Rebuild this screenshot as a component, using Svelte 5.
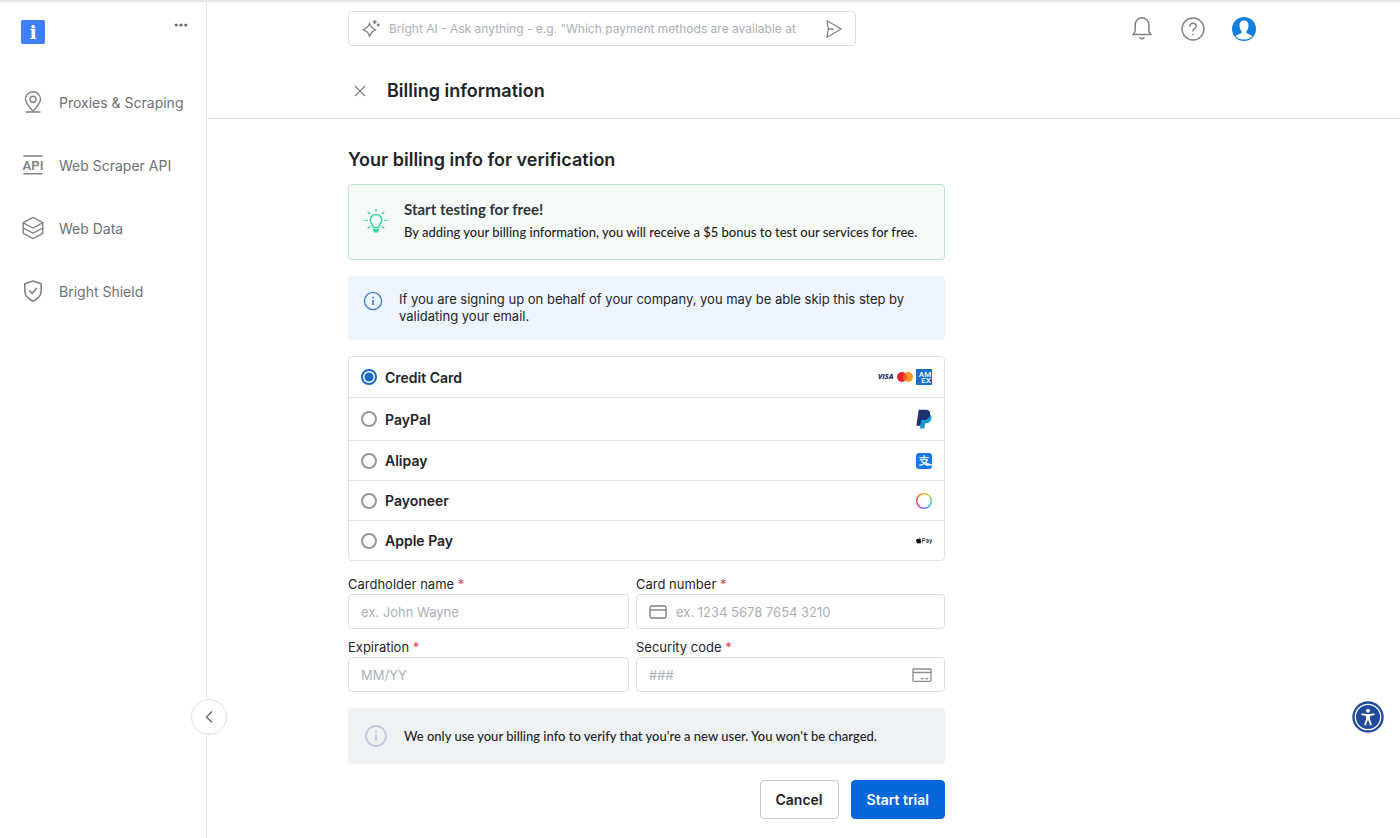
<script lang="ts">
    const navItems = [
        { id: 'proxies', label: 'Proxies & Scraping' },
        { id: 'api', label: 'Web Scraper API' },
        { id: 'data', label: 'Web Data' },
        { id: 'shield', label: 'Bright Shield' },
    ];

    const methods = [
        { id: 'card', label: 'Credit Card' },
        { id: 'paypal', label: 'PayPal' },
        { id: 'alipay', label: 'Alipay' },
        { id: 'payoneer', label: 'Payoneer' },
        { id: 'applepay', label: 'Apple Pay' },
    ];

    let method = $state('card');
    let question = $state('');
    let cardholder = $state('');
    let cardNumber = $state('');
    let expiration = $state('');
    let securityCode = $state('');
</script>

<div class="app">
    <aside class="sidebar">
        <div class="sidebar-top">
            <a class="logo" href="#home" aria-label="Home">
                <svg width="24" height="24" viewBox="0 0 24 24">
                    <rect width="24" height="24" rx="2" fill="#3d7ffc" />
                    <text x="12" y="19" text-anchor="middle" font-family="DejaVu Serif, serif" font-weight="700" font-size="19" fill="#fff">i</text>
                </svg>
            </a>
            <button class="icon-button more" aria-label="More">
                <svg width="14" height="6" viewBox="0 0 14 6" fill="#666c70">
                    <circle cx="2.2" cy="3" r="1.6" />
                    <circle cx="7" cy="3" r="1.6" />
                    <circle cx="11.8" cy="3" r="1.6" />
                </svg>
            </button>
        </div>

        <nav>
            {#each navItems as item (item.id)}
                <a class="nav-item" href={`#${item.id}`}>
                    <svg width="24" height="24" viewBox="0 0 24 24" fill="none" stroke="#7d8387" stroke-width="1.4" stroke-linecap="round" stroke-linejoin="round">
                        {#if item.id === 'proxies'}
                            <path d="M12 21.2C9.6 18.4 4.5 13.6 4.5 9.2a7.5 7.5 0 0 1 15 0c0 4.4-5.1 9.2-7.5 12z" />
                            <circle cx="12" cy="9.2" r="3" />
                            <path d="M5 22h14" />
                        {:else if item.id === 'api'}
                            <path d="M2.4 3h19.2M2.4 20.8h19.2" stroke-width="1.6" stroke-linecap="butt" />
                            <text x="12" y="16.8" text-anchor="middle" font-family="Roboto, sans-serif" font-weight="600" font-size="13" fill="#7d8387" stroke="none">API</text>
                        {:else if item.id === 'data'}
                            <path d="M12 1.4l9.8 5.2v10.8L12 22.6l-9.8-5.2V6.6z" />
                            <path d="M2.2 6.8l9.8 5.2 9.8-5.2M2.2 12l9.8 5.2 9.8-5.2" />
                        {:else}
                            <path d="M12 2l8.2 2.7v7.1c0 5-3.6 8.3-8.2 10.4-4.6-2.1-8.2-5.4-8.2-10.4V4.7z" stroke-width="1.6" />
                            <path d="M8.6 11.8l2.5 2.7 4.3-5.2" stroke-width="1.6" />
                        {/if}
                    </svg>
                    <span>{item.label}</span>
                </a>
            {/each}
        </nav>

        <button class="collapse" aria-label="Collapse sidebar">
            <svg width="8" height="14" viewBox="0 0 8 14" fill="none" stroke="#666" stroke-width="1.3">
                <path d="M7 1.5L1.5 7 7 12.5" />
            </svg>
        </button>
    </aside>

    <main>
        <header>
            <div class="topbar">
                <div class="search">
                    <svg width="20" height="20" viewBox="0 0 20 20" fill="none" stroke="#7d8387" stroke-width="1.3" stroke-linejoin="round">
                        <path d="M8.5 4.2c1 3.9 2.4 5.3 6.3 6.6-3.9 1.3-5.3 2.7-6.3 6.9-1-4.2-2.4-5.6-6.6-6.9 4.2-1.3 5.6-2.7 6.6-6.6z" />
                        <path d="M13.7 1v4M11.7 3h4M17.2 4.6v3M15.7 6.1h3" stroke-width="1.5" />
                    </svg>
                    <input type="text" aria-label="Ask Bright AI" placeholder={'Bright AI - Ask anything - e.g. "Which payment methods are available at'} bind:value={question} />
                    <button class="icon-button" aria-label="Send">
                        <svg width="18" height="20" viewBox="0 0 18 20" fill="none" stroke="#7d8387" stroke-width="1.3" stroke-linejoin="round" stroke-linecap="round">
                            <path d="M2 1.8l14.2 8.2L2 18.2l1.3-8.2zM3.3 10h5" />
                        </svg>
                    </button>
                </div>

                <div class="actions">
                    <button class="icon-button" aria-label="Notifications">
                        <svg width="24" height="24" viewBox="0 0 24 24" fill="none" stroke="#7d8387" stroke-width="1.5" stroke-linecap="round" stroke-linejoin="round">
                            <path d="M2.9 17.6h18.2c-1.5-.9-2.3-2.2-2.3-4.6V7.6a6.8 6.8 0 0 0-13.6 0V13c0 2.4-.8 3.7-2.3 4.6z" />
                            <path d="M10 20.8c.9 1.3 3.1 1.3 4 0" />
                        </svg>
                    </button>
                    <button class="icon-button" aria-label="Help">
                        <svg width="24" height="24" viewBox="0 0 24 24" fill="none" stroke="#7d8387" stroke-width="1.4" stroke-linecap="round">
                            <circle cx="12" cy="12" r="11" />
                            <path d="M8.8 9.3c0-1.8 1.4-3.1 3.2-3.1s3.2 1.2 3.2 2.9c0 2.5-3.2 2.6-3.2 5" />
                            <circle cx="12" cy="17.4" r=".5" fill="#7d8387" stroke-width=".8" />
                        </svg>
                    </button>
                    <button class="icon-button" aria-label="Account">
                        <svg width="24" height="24" viewBox="0 0 24 24">
                            <circle cx="12" cy="12" r="12" fill="#1280dc" />
                            <path d="M12 3.4c2.9 0 4.6 2 4.5 5-.1 2.5-.8 4.2-2 5.400v2c.4 1.200 4.600 1.600 5.800 3.600A11 11 0 0 1 12 22.500a11 11 0 0 1-8.300-3.100c1.200-2 5.400-2.400 5.800-3.600v-2c-1.200-1.200-1.900-2.900-2-5.400-.1-3 1.600-5 4.500-5z" fill="#fff" />
                        </svg>
                    </button>
                </div>
            </div>

            <div class="title-row">
                <button class="icon-button" aria-label="Close">
                    <svg width="12" height="12" viewBox="0 0 12 12" stroke="#777d81" stroke-width="1.1">
                        <path d="M1 1l10 10M11 1L1 11" />
                    </svg>
                </button>
                <h1>Billing information</h1>
            </div>
        </header>

        <form class="billing" onsubmit={(e) => e.preventDefault()}>
            <h2>Your billing info for verification</h2>

            <section class="bonus">
                <svg width="24" height="26" viewBox="0 0 24 26" fill="none" stroke="#3fd79b" stroke-width="1.5" stroke-linecap="round">
                    <path d="M9.5 19.2c0-2.3-3.3-3.3-3.3-7a5.8 5.8 0 0 1 11.6 0c0 3.7-3.3 4.7-3.3 7z" />
                    <path d="M9.3 21.6h5.4l-1.3 2.2h-2.8z" fill="#3fd79b" />
                    <path d="M12 1.2v2M4.2 4.2l1.5 1.5M19.8 4.2l-1.5 1.5M.9 12.4h2.2M20.9 12.4h2.2M4.2 20.3l1.5-1.5M19.8 20.3l-1.5-1.5" stroke-width="1.3" />
                </svg>
                <div>
                    <h3>Start testing for free!</h3>
                    <p>By adding your billing information, you will receive a $5 bonus to test our services for free.</p>
                </div>
            </section>

            <section class="company">
                <svg width="20" height="20" viewBox="0 0 20 20" fill="none" stroke="#3d7fc0">
                    <circle cx="10" cy="10" r="8.6" stroke-width="1.3" />
                    <path d="M10 9v5" stroke-width="1.6" />
                    <circle cx="10" cy="6.5" r=".9" fill="#3d7fc0" stroke="none" />
                </svg>
                <p>If you are signing up on behalf of your company, you may be able skip this step by validating your email.</p>
            </section>

            <div class="methods" role="radiogroup" aria-label="Payment method">
                {#each methods as m (m.id)}
                    <label class="method">
                        <input type="radio" name="method" value={m.id} bind:group={method} />
                        <span>{m.label}</span>
                        {#if m.id === 'card'}
                            <svg width="54" height="20" viewBox="0 -2 54 20">
                                <text x="0" y="10" font-family="Open Sans, sans-serif" font-weight="800" font-style="italic" font-size="7" fill="#20306f">VISA</text>
                                <circle cx="24" cy="8" r="5" fill="#e9202b" />
                                <circle cx="30" cy="8" r="5" fill="#f79a2b" />
                                <path d="M27 4a5 5 0 0 1 0 8 5 5 0 0 1 0-8z" fill="#f45a1c" />
                                <rect x="38" width="16" height="16" fill="#1670c8" />
                                <text x="47" y="7.5" text-anchor="middle" font-family="Roboto, sans-serif" font-weight="500" font-size="8" fill="#fff">AM</text>
                                <text x="48" y="14" text-anchor="middle" font-family="Roboto, sans-serif" font-weight="500" font-size="8" fill="#fff">EX</text>
                            </svg>
                        {:else if m.id === 'paypal'}
                            <svg width="16" height="22" viewBox="0 -1 16 22">
                                <path d="M5.5 5h7.9c2.2 1 2.5 3 1.9 5.3-.7 2.6-2.5 3.9-5.3 3.9H9.2l-.9 5.3H4z" fill="#1797d5" />
                                <path d="M2.7.7h6.8c3.5 0 5.1 1.9 4.5 5.2-.6 3.5-2.8 5-6.2 5H5.4l-1 5.8H.4z" fill="#20306f" />
                            </svg>
                        {:else if m.id === 'alipay'}
                            <svg width="16" height="16" viewBox="0 0 16 16">
                                <rect width="16" height="16" rx="3" fill="#1677ef" />
                                <text x="8" y="12" text-anchor="middle" font-family="Noto Sans CJK SC, sans-serif" font-weight="500" font-size="11" fill="#fff">支</text>
                                <path d="M10 10.200c2 .9 4 1.500 6 1.900" fill="none" stroke="#fff" stroke-width="1.400" />
                            </svg>
                        {:else if m.id === 'payoneer'}
                            <span class="ring"></span>
                        {:else}
                            <svg width="16" height="8" viewBox="0 0 16 8">
                                <path d="M3.7 1.8c.5-.2 1.1 0 1.4.4-.8.6-.7 1.9.3 2.3C5 5.7 4.5 6.4 4 6.4c-.5 0-.6-.2-1.1-.2s-.7.2-1.1.2C.9 6.400.2 4.900.2 3.700.2 2.300 1.300 1.500 2.300 1.900c.6.2.9.1 1.400-.1zM2.800 1.500C2.800.8 3.300.3 3.900.2c0 .7-.4 1.200-1.100 1.300z" fill="#111" />
                                <text x="5.8" y="6.200" font-family="Inter, sans-serif" font-weight="500" font-size="6" fill="#111">Pay</text>
                            </svg>
                        {/if}
                    </label>
                {/each}
            </div>

            <div class="fields">
                <div class="field">
                    <label for="cardholder">Cardholder name <em>*</em></label>
                    <div class="control">
                        <input id="cardholder" type="text" placeholder="ex. John Wayne" bind:value={cardholder} />
                    </div>
                </div>
                <div class="field">
                    <label for="card-number">Card number <em>*</em></label>
                    <div class="control">
                        <svg width="18" height="14" viewBox="0 0 18 14" fill="none" stroke="#7d8387" stroke-width="1.4">
                            <rect x="1" y="1" width="16" height="12" rx="1.5" />
                            <path d="M1 5h16" />
                        </svg>
                        <input id="card-number" type="text" placeholder="ex. 1234 5678 7654 3210" bind:value={cardNumber} />
                    </div>
                </div>
                <div class="field">
                    <label for="expiration">Expiration <em>*</em></label>
                    <div class="control">
                        <input id="expiration" type="text" placeholder="MM/YY" bind:value={expiration} />
                    </div>
                </div>
                <div class="field">
                    <label for="security-code">Security code <em>*</em></label>
                    <div class="control">
                        <input id="security-code" type="text" placeholder="###" bind:value={securityCode} />
                        <svg width="20" height="14" viewBox="0 0 20 14" fill="none" stroke="#8b9094" stroke-width="1.3">
                            <rect x="1" y="1" width="18" height="12.3" rx=".5" />
                            <path d="M1 4.5h18M8.7 10.7h3M13.2 10.7h3" />
                        </svg>
                    </div>
                </div>
            </div>

            <section class="notice">
                <svg width="24" height="24" viewBox="0 0 24 24" fill="none" stroke="#c3cad9">
                    <circle cx="12" cy="12" r="10" stroke-width="1.8" />
                    <path d="M12 10.5v6.5" stroke-width="1.8" />
                    <circle cx="12" cy="7.6" r="1.1" fill="#c3cad9" stroke="none" />
                </svg>
                <p>We only use your billing info to verify that you're a new user. You won't be charged.</p>
            </section>

            <div class="buttons">
                <button type="button" class="cancel">Cancel</button>
                <button type="submit" class="submit">Start trial</button>
            </div>
        </form>
    </main>

    <button class="accessibility" aria-label="Accessibility options">
        <svg width="32" height="32" viewBox="0 0 32 32">
            <circle cx="16" cy="16" r="15.7" fill="#214a9a" />
            <circle cx="16" cy="16" r="12.7" fill="none" stroke="#fff" stroke-width="1.3" />
            <circle cx="16" cy="9.8" r="2" fill="#fff" />
            <path d="M10.3 13.4l4.2.6h3l4.2-.6M16 14v4.5M14.9 14.5v4l-1.7 5M17.1 14.5v4l1.7 5" fill="none" stroke="#fff" stroke-width="1.9" stroke-linecap="round" stroke-linejoin="round" />
        </svg>
    </button>
</div>

<style>
    :global(body) {
        background: #fff;
        color: #1f2428;
        font-family: Inter, "Liberation Sans", sans-serif;
        font-size: 14px;
    }

    * {
        box-sizing: border-box;
    }

    h1, h2, h3, p {
        margin: 0;
    }

    svg {
        display: block;
        flex-shrink: 0;
    }

    button, input {
        font: inherit;
        color: inherit;
    }

    button {
        cursor: pointer;
    }

    .app {
        display: flex;
        min-height: 100vh;
        border-top: 2px solid #e6e6e6;
    }

    .sidebar {
        position: relative;
        flex: 0 0 207px;
        border-right: 1px solid #e3e5e6;
    }

    .sidebar-top {
        display: flex;
        justify-content: space-between;
        align-items: flex-start;
        padding: 18px 18px 0 21px;
    }

    .icon-button {
        display: flex;
        padding: 0;
        border: none;
        background: none;
    }

    .more {
        padding-top: 2px;
    }

    nav {
        display: flex;
        flex-direction: column;
        gap: 39px;
        padding: 46px 21px;
    }

    .nav-item {
        display: flex;
        align-items: center;
        gap: 14px;
        height: 24px;
        color: #6c7276;
        text-decoration: none;
        white-space: nowrap;
    }

    .collapse {
        position: absolute;
        right: -21px;
        bottom: 103px;
        display: flex;
        align-items: center;
        justify-content: center;
        width: 36px;
        height: 36px;
        padding: 0;
        border: 1px solid #dcdfe1;
        border-radius: 50%;
        background: #fff;
    }

    main {
        flex: 1;
        min-width: 0;
    }

    header {
        padding: 9px 144px 0 141px;
        border-bottom: 1px solid #dfe1e3;
    }

    .topbar {
        display: flex;
        align-items: center;
        justify-content: space-between;
    }

    .search {
        display: flex;
        align-items: center;
        gap: 8px;
        flex: 0 1 508px;
        height: 35px;
        padding: 0 12px;
        border: 1px solid #dcdfe1;
        border-radius: 4px;
    }

    .search input {
        flex: 1;
        min-width: 0;
        font-size: 12px;
        padding: 0;
        border: none;
        outline: none;
        background: none;
    }

    input::placeholder {
        color: #aab0b5;
        opacity: 1;
    }

    .actions {
        display: flex;
        gap: 27px;
    }

    .title-row {
        display: flex;
        align-items: center;
        gap: 21px;
        padding: 33px 0 15px 6px;
    }

    h1 {
        font-size: 18px;
        line-height: 24px;
        font-weight: 600;
    }

    h2 {
        margin-bottom: 12px;
        font-size: 18px;
        line-height: 24px;
        font-weight: 600;
    }

    .billing {
        width: 100%;
        max-width: 738px;
        padding: 29px 0 19px 141px;
    }

    .bonus, .company, .notice {
        display: flex;
        border-radius: 4px;
        margin-bottom: 16px;
    }

    .bonus {
        align-items: center;
        gap: 16px;
        padding: 13px 15px 15px;
        border: 1px solid #bfe3d3;
        background: #f6fbf8;
    }

    .bonus h3, .bonus p, .notice p {
        font-family: Lato, sans-serif;
        font-size: 13px;
        line-height: 23px;
        font-weight: 500;
        font-variant-ligatures: none;
    }

    .bonus h3 {
        font-size: 15px;
        font-weight: 700;
        color: #2c3440;
    }

    .company {
        gap: 16px;
        padding: 15px;
        background: #edf4fe;
    }

    .company p {
        font-size: 13px;
        line-height: 17px;
    }

    .methods {
        border: 1px solid #dfe1e3;
        border-radius: 4px;
    }

    .method {
        display: flex;
        align-items: center;
        gap: 8px;
        padding: 10px 12px;
        line-height: 19px;
        font-weight: 600;
    }

    .method + .method {
        border-top: 1px solid #dfe1e3;
    }

    .method > span:nth-child(2) {
        flex: 1;
    }

    .method input {
        appearance: none;
        width: 16px;
        height: 16px;
        margin: 0;
        border: 2px solid #96999b;
        border-radius: 50%;
        background: #fff;
    }

    .method input:checked {
        border-color: #1a68c7;
        background: radial-gradient(circle, #1a68c7 4px, #fff 5px);
    }

    .ring {
        width: 16px;
        height: 16px;
        border-radius: 50%;
        background:
            radial-gradient(circle, #fff 6px, transparent 7px),
            conic-gradient(#f7a32c, #c9d63a, #3fce7a, #31b8e8, #6a63e0, #d83bb0, #f0413b, #f7762c, #f7a32c);
    }

    .fields {
        display: grid;
        grid-template-columns: 281fr 309fr;
        gap: 8px 7px;
        padding: 13px 0 16px;
    }

    .field label {
        display: block;
        margin-bottom: 1px;
        padding-top: 1px;
        font-size: 13px;
        line-height: 18px;
    }

    .field em {
        color: #e0445c;
        font-style: normal;
    }

    .control {
        display: flex;
        align-items: center;
        gap: 9px;
        height: 35px;
        padding: 0 12px;
        border: 1px solid #dcdfe1;
        border-radius: 4px;
    }

    .control input {
        flex: 1;
        min-width: 0;
        padding: 0;
        font-size: 13px;
        border: none;
        outline: none;
        background: none;
    }

    .notice {
        align-items: center;
        gap: 16px;
        padding: 16px;
        background: #eff2f5;
    }

    .buttons {
        display: flex;
        justify-content: flex-end;
        gap: 12px;
    }

    .buttons button {
        height: 39px;
        padding: 0 15px;
        border: 1px solid #c9cccf;
        border-radius: 4px;
        background: #fff;
        font-weight: 600;
    }

    .buttons .submit {
        border-color: #0567dc;
        background: #0567dc;
        color: #fff;
    }

    .accessibility {
        position: fixed;
        right: 16px;
        bottom: 105px;
        padding: 0;
        border: none;
        border-radius: 50%;
        background: none;
    }
</style>
